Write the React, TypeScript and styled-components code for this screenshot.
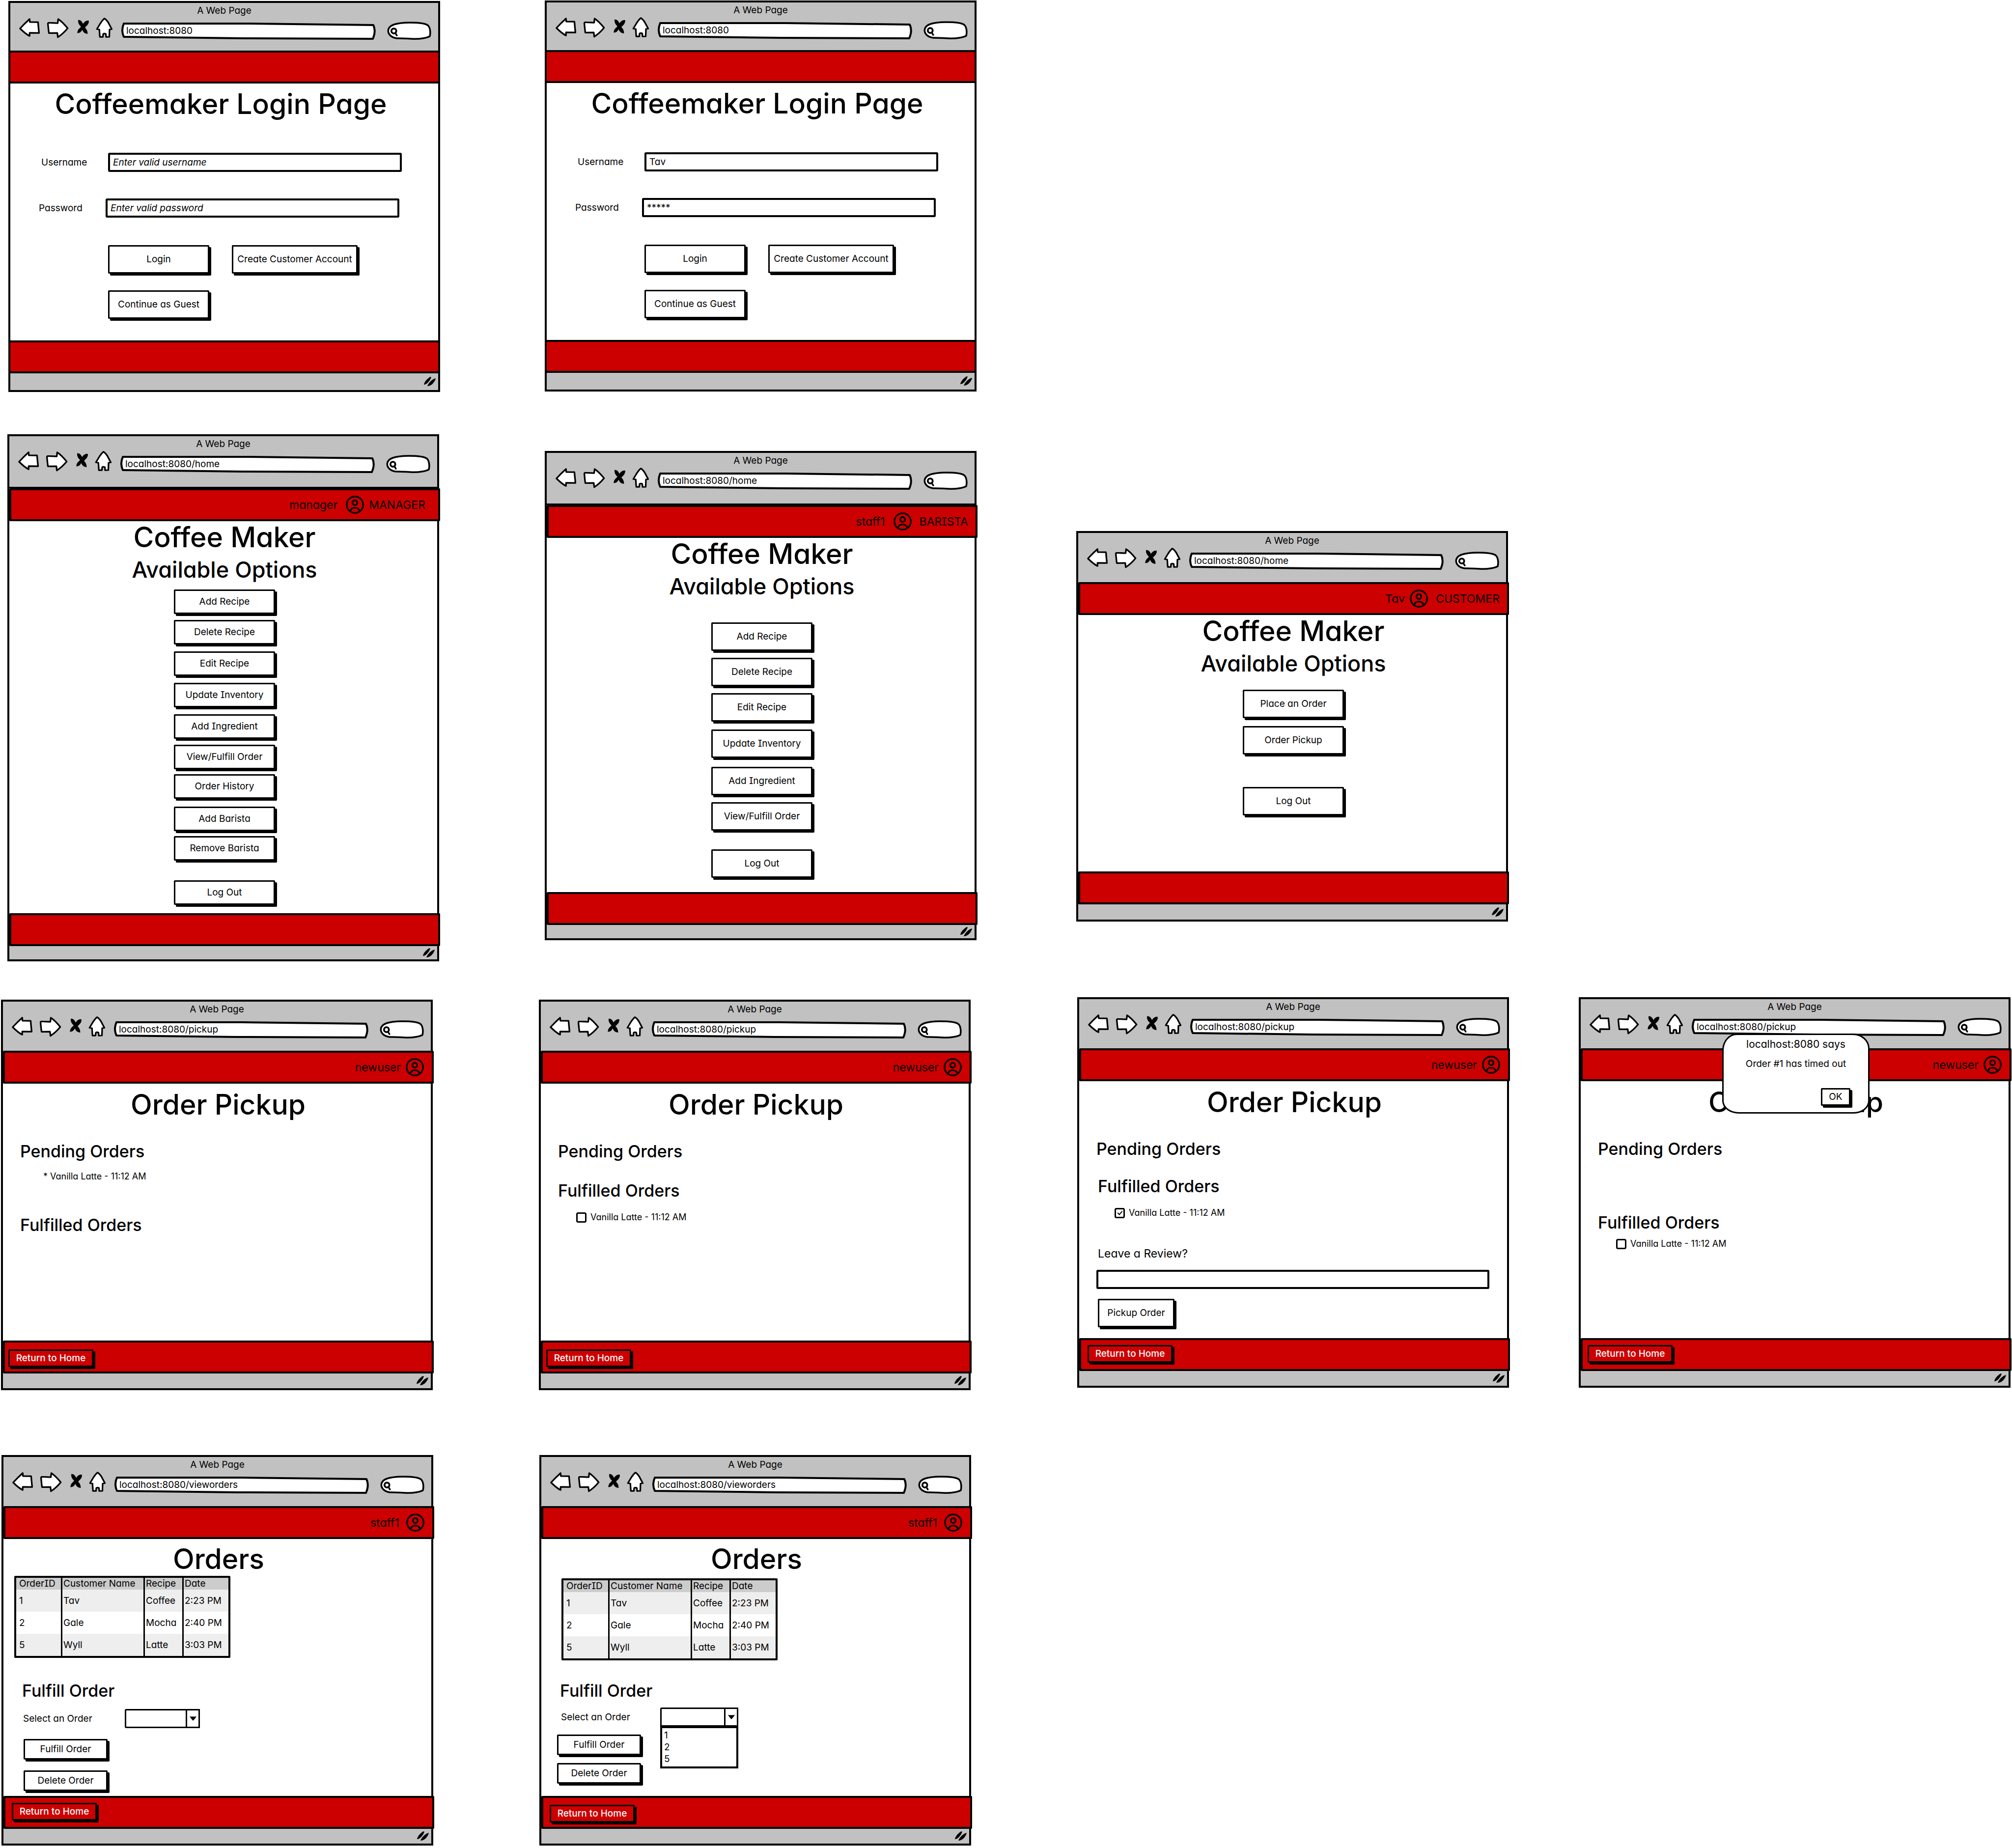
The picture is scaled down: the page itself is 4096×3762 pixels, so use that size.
import React, { useId } from "react";
import styled, { createGlobalStyle } from "styled-components";

const ink = "#000";
const chromeGrey = "#c1c1c1";
const red = "#cc0000";

const GlobalStyle = createGlobalStyle`
  *, *::before, *::after { box-sizing: border-box; }
  body { margin: 0; background: #fff; }
  #root, button, input, select, table {
    color: ${ink};
    font-family: Inter, "Liberation Sans", sans-serif;
    font-size: 19px;
    line-height: 24px;
    font-feature-settings: "cv11", "cv08";
  }
`;

/* ---------- board ---------- */

const Board = styled.main`
  display: flex;
  flex-direction: column;
  min-height: 100vh;
  overflow: hidden;
`;

const BoardRow = styled.section<{ $tracks: number[]; $left: number; $above: number }>`
  display: grid;
  grid-template-columns: ${(p) => p.$tracks.map((t) => `minmax(0, ${t}fr)`).join(" ")};
  align-items: start;
  padding-left: ${(p) => p.$left}px;
  margin-top: ${(p) => p.$above}px;
`;

const Frame = styled.article<{ $drop: number }>`
  position: relative;
  display: flex;
  flex-direction: column;
  width: 100%;
  max-width: 879px;
  margin-top: ${(p) => p.$drop}px;
  border: 4px solid ${ink};
  background: #fff;
`;

/* ---------- browser chrome ---------- */

const Chrome = styled.header<{ $tall?: boolean; $short?: boolean }>`
  min-height: ${(p) => (p.$tall ? 106 : p.$short ? 97 : 100)}px;
  padding-top: 4px;
  border-bottom: ${(p) => (p.$tall ? 3 : 0)}px solid ${ink};
  background: ${chromeGrey};
`;

const ChromeTitle = styled.div`
  text-align: center;
`;

const Toolbar = styled.div`
  display: flex;
  align-items: flex-end;
  gap: 12px;
  padding: 0 14px 0 17px;
`;

const IconButton = styled.button`
  display: block;
  padding: 0;
  border: 0;
  background: none;
  svg { display: block; }
`;

const Address = styled.div`
  position: relative;
  flex: 1;
  height: 36px;
  margin: 0 11px 0 4px;
`;

const SearchPill = styled.div`
  position: relative;
  width: 90px;
  height: 37px;
`;

const Outline = styled.svg`
  position: absolute;
  inset: 0;
  width: 100%;
  height: 100%;
`;

const BareInput = styled.input<{ $inset: number }>`
  position: relative;
  display: block;
  width: 100%;
  height: 34px;
  padding: 0 8px 0 ${(p) => p.$inset}px;
  border: 0;
  outline: 0;
  background: transparent;
`;

const StatusBar = styled.footer<{ $height: number }>`
  display: flex;
  justify-content: flex-end;
  align-items: center;
  height: ${(p) => p.$height}px;
  padding-right: 5px;
  background: ${chromeGrey};
`;

const RedBar = styled.div<{ $flush?: boolean }>`
  display: flex;
  align-items: center;
  height: 67px;
  margin: ${(p) => (p.$flush ? "0 -4px" : "0 -6px 0 0")};
  border: 4px solid ${ink};
  border-radius: 2px;
  background: ${red};
`;

const UserBar = styled(RedBar)<{ $end: number }>`
  justify-content: flex-end;
  padding-right: ${(p) => p.$end}px;
  font-size: 23px;
  line-height: 28px;
`;

const AvatarSlot = styled.span<{ $before: number; $after: number }>`
  display: block;
  height: 37px;
  margin: 0 ${(p) => p.$after}px 0 ${(p) => p.$before}px;
`;

const HomeBar = styled(RedBar)<{ $top: number; $start: number }>`
  align-items: flex-start;
  padding: ${(p) => p.$top}px 0 0 ${(p) => p.$start}px;
`;

const Body = styled.div<{ $height: number; $top?: number }>`
  position: relative;
  display: flex;
  flex-direction: column;
  min-height: ${(p) => p.$height}px;
  padding-top: ${(p) => p.$top ?? 0}px;
`;

/* ---------- text ---------- */

const PageTitle = styled.h1<{ $nudge?: "left" | "right" }>`
  margin: 0;
  padding: ${(p) => (p.$nudge === "left" ? "0 14px 0 0" : "0 0 0 5px")};
  font-size: 57px;
  line-height: 66px;
  font-weight: 500;
  text-align: center;
`;

const SubTitle = styled.h2`
  margin: 6px 0 0;
  padding-left: 5px;
  font-size: 45px;
  line-height: 54px;
  font-weight: 500;
  text-align: center;
`;

const SectionTitle = styled.h2<{ $above: number; $left?: number }>`
  margin: ${(p) => p.$above}px 0 0 ${(p) => p.$left ?? 35}px;
  font-size: 34px;
  line-height: 40px;
  font-weight: 500;
`;

/* ---------- controls ---------- */

const Button = styled.button<{ $w: number; $h: number; $above?: number; $danger?: boolean }>`
  flex: none;
  width: ${(p) => p.$w}px;
  height: ${(p) => p.$h}px;
  margin-top: ${(p) => p.$above ?? 0}px;
  padding: 0;
  border: 3px solid ${ink};
  border-radius: 2px;
  background: ${(p) => (p.$danger ? red : "#fff")};
  box-shadow: 4px 4px 0 ${ink};
  color: ${(p) => (p.$danger ? "#fff" : ink)};
  font-weight: ${(p) => (p.$danger ? 500 : 400)};
  white-space: nowrap;
`;

const TextField = styled.input`
  flex: 1;
  min-width: 0;
  height: 39px;
  padding: 0 6px;
  border: 4px solid ${ink};
  border-radius: 3px;
  outline: 0;
  background: #fff;
  &::placeholder {
    color: ${ink};
    font-style: italic;
    opacity: 1;
  }
`;

const FieldRow = styled.div<{ $left: number; $right: number; $above: number }>`
  display: flex;
  align-items: center;
  margin: ${(p) => p.$above}px ${(p) => p.$right}px 0 ${(p) => p.$left}px;
`;

const FieldLabel = styled.label<{ $w: number }>`
  width: ${(p) => p.$w}px;
`;

const ButtonRow = styled.div<{ $above: number; $left: number }>`
  display: flex;
  gap: 46px;
  margin: ${(p) => p.$above}px 0 0 ${(p) => p.$left}px;
`;

const Menu = styled.nav<{ $above: number }>`
  display: flex;
  flex-direction: column;
  align-items: center;
  padding: ${(p) => p.$above}px 0 0 5px;
`;

const BulletList = styled.ul`
  margin: 19px 0 0;
  padding: 0 0 0 82px;
  font-size: 18px;
  list-style: none;
`;

const CheckRow = styled.label<{ $above: number }>`
  display: flex;
  align-items: center;
  gap: 8px;
  margin: ${(p) => p.$above}px 0 0 72px;
  font-size: 18px;
`;

const Tick = styled.input`
  appearance: none;
  position: relative;
  width: 21px;
  height: 21px;
  margin: 0;
  border: 3px solid ${ink};
  border-radius: 4px;
  background: #fff;
  &:checked::after {
    content: "";
    position: absolute;
    left: 5px;
    top: 1px;
    width: 6px;
    height: 10px;
    border: solid ${ink};
    border-width: 0 2px 2px 0;
    transform: rotate(42deg);
  }
`;

const ReviewLabel = styled.label`
  margin: 57px 0 0 38px;
  font-size: 23px;
  line-height: 28px;
`;

const ReviewRow = styled.div`
  display: flex;
  margin: 19px 36px 0 35px;
`;

const SelectBox = styled.div<{ $w: number }>`
  position: relative;
  width: ${(p) => p.$w}px;
`;

const Select = styled.select`
  appearance: none;
  display: block;
  width: 100%;
  height: 39px;
  padding: 0 30px 0 8px;
  border: 3px solid ${ink};
  border-radius: 3px;
  background: #fff;
`;

const SelectArrow = styled.span`
  position: absolute;
  top: 0;
  right: 0;
  display: grid;
  place-items: center;
  width: 29px;
  height: 39px;
  border: solid ${ink};
  border-width: 0 3px;
  pointer-events: none;
`;

const OptionList = styled.ul`
  position: absolute;
  top: 36px;
  left: 0;
  width: 100%;
  margin: 0;
  padding: 3px 0 3px 4px;
  border: 4px solid ${ink};
  border-top-width: 6px;
  background: #fff;
  list-style: none;
`;

const OrdersTable = styled.table<{ $left: number; $above: number }>`
  width: 440px;
  margin: ${(p) => p.$above}px 0 0 ${(p) => p.$left}px;
  border: 4px solid ${ink};
  border-radius: 2px;
  border-spacing: 0;
  table-layout: fixed;
  th, td {
    height: 45px;
    padding: 0 0 0 2px;
    border-right: 3px solid ${ink};
    font-weight: 400;
    text-align: left;
    white-space: nowrap;
  }
  th { height: 24px; background: #ccc; }
  th:first-child, td:first-child { padding-left: 6px; }
  th:last-child, td:last-child { border-right: 0; }
  tbody tr:nth-child(odd) { background: #eee; }
`;

const Dialog = styled.div`
  position: absolute;
  top: 70px;
  left: 288px;
  display: flex;
  flex-direction: column;
  align-items: center;
  width: 300px;
  height: 163px;
  padding-top: 5px;
  border: 3px solid ${ink};
  border-radius: 30px 34px 32px 34px / 34px 30px 26px 26px;
  background: #fff;
`;

const DialogTitle = styled.div`
  font-size: 21px;
  line-height: 28px;
`;

const DialogText = styled.div`
  margin-top: 14px;
`;

const DialogActions = styled.div`
  align-self: flex-end;
  margin: 37px 36px 0 0;
`;

/* ---------- drawings ---------- */

const sketch = { fill: "#fff", stroke: ink, strokeWidth: 13, strokeLinejoin: "round" as const };

const BackIcon = () => (
  <svg width="45" height="47" viewBox="90 137 178 186">
    <path {...sketch} d="M178 156 L180 180 L246 181 Q249 220 254 268 L178 267 L178 292 Q150 280 101 232 Q135 195 178 156 Z" />
  </svg>
);

const ForwardIcon = () => (
  <svg width="45" height="47" viewBox="313 137 178 186">
    <path {...sketch} d="M406 156 Q440 178 482 230 Q445 275 403 302 L399 268 L331 269 Q327 240 323 192 Q325 185 335 186 L402 189 Z" />
  </svg>
);

const StopIcon = () => (
  <svg width="30" height="47" viewBox="542 137 120 186">
    <path
      fill={ink}
      d="M570 163 Q590 160 601 178 L611 194 Q630 163 657 168 Q660 190 643 207 L626 224 Q648 246 648 276 Q624 275 611 257 L603 243 Q590 270 564 270 Q562 248 580 232 L594 218 Q567 195 570 163 Z"
    />
  </svg>
);

const HomeIcon = () => (
  <svg width="37" height="47" viewBox="706 137 148 186">
    <path
      {...sketch}
      d="M780 151 Q795 158 812 184 L840 237 L822 240 L820 300 L794 301 L792 277 Q780 270 770 277 L768 300 L743 300 L739 240 L719 237 L746 192 Q765 163 780 151 Z"
    />
  </svg>
);

const AvatarIcon = () => (
  <svg width="37" height="37" viewBox="510 522 144 144" fill="none" stroke={ink} strokeWidth="13" role="img" aria-label="Account">
    <circle cx="582" cy="594" r="65" />
    <circle cx="582" cy="578" r="19" />
    <path d="M546 643 Q553 618 582 618 Q611 618 619 643" />
  </svg>
);

const GripIcon = () => (
  <svg width="24" height="20" viewBox="0 0 24 20" fill={ink} aria-hidden="true">
    <path d="M0 16 Q1 9 10 2 L13 0 L15 1 Q13 7 8 12 Q4 16 0 16 Z" />
    <path d="M7 19 Q9 13 16 7 Q20 4 24 3 Q23 9 17 15 Q12 19 7 19 Z" />
  </svg>
);

const ArrowIcon = () => (
  <svg width="14" height="9" viewBox="0 0 14 9" fill={ink} aria-hidden="true">
    <path d="M0 0 Q7 1 14 0 Q12 4 7 9 Q3 5 0 0 Z" />
  </svg>
);

/* ---------- composed parts ---------- */

type Account = { name: string; role?: string; before: number; after: number; end: number };

type BrowserProps = {
  url: string;
  drop?: number;
  tall?: boolean;
  short?: boolean;
  flush?: boolean;
  account?: Account;
  home?: { top: number; start: number };
  bodyHeight: number;
  bodyTop?: number;
  status: number;
  overlay?: React.ReactNode;
  children: React.ReactNode;
};

function Browser(p: BrowserProps) {
  return (
    <Frame $drop={p.drop ?? 0}>
      <Chrome $tall={p.tall} $short={p.short}>
        <ChromeTitle>A Web Page</ChromeTitle>
        <Toolbar>
          <IconButton aria-label="Back"><BackIcon /></IconButton>
          <IconButton aria-label="Forward"><ForwardIcon /></IconButton>
          <IconButton aria-label="Stop"><StopIcon /></IconButton>
          <IconButton aria-label="Home"><HomeIcon /></IconButton>
          <Address>
            <Outline viewBox="0 0 517 36" preserveAspectRatio="none" aria-hidden="true">
              <path
                d="M5 3 L260 3 L512 6 Q518 18 511 34 L250 33 L5 30 Q-1 17 5 3 Z"
                fill="#fff"
                stroke={ink}
                strokeWidth="4"
                strokeLinejoin="round"
              />
            </Outline>
            <BareInput $inset={10} aria-label="Address" defaultValue={p.url} />
          </Address>
          <SearchPill>
            <Outline viewBox="837 195 358 148" aria-hidden="true">
              <path
                d="M916 331 C872 326 845 300 845 268 C848 225 900 204 1020 203 C1100 203 1150 211 1168 225 C1190 245 1190 290 1184 314 C1165 327 1110 336 1058 336 C1000 334 960 329 916 331 Z"
                fill="#fff"
                stroke={ink}
                strokeWidth="14"
              />
              <circle cx="891" cy="271" r="20" fill="none" stroke={ink} strokeWidth="15" />
              <path d="M903 288 L916 308" stroke={ink} strokeWidth="13" strokeLinecap="round" />
            </Outline>
            <BareInput $inset={24} aria-label="Search" />
          </SearchPill>
        </Toolbar>
      </Chrome>
      {p.account ? (
        <UserBar $end={p.account.end}>
          <span>{p.account.name}</span>
          <AvatarSlot $before={p.account.before} $after={p.account.after}><AvatarIcon /></AvatarSlot>
          {p.account.role && <span>{p.account.role}</span>}
        </UserBar>
      ) : (
        <RedBar $flush={p.flush} />
      )}
      <Body $height={p.bodyHeight} $top={p.bodyTop}>{p.children}</Body>
      {p.home ? (
        <HomeBar $top={p.home.top} $start={p.home.start}>
          <Button $w={173} $h={36} $danger>Return to Home</Button>
        </HomeBar>
      ) : (
        <RedBar $flush={p.flush} />
      )}
      <StatusBar $height={p.status}><GripIcon /></StatusBar>
      {p.overlay}
    </Frame>
  );
}

function LoginScreen({ filled, drop }: { filled?: boolean; drop?: number }) {
  const id = useId();
  return (
    <Browser url="localhost:8080" short flush drop={drop} bodyHeight={523} bodyTop={9} status={34}>
      <PageTitle $nudge="left">Coffeemaker Login Page</PageTitle>
      <FieldRow $left={63} $right={74} $above={66}>
        <FieldLabel $w={136} htmlFor={`${id}-user`}>Username</FieldLabel>
        <TextField id={`${id}-user`} placeholder="Enter valid username" defaultValue={filled ? "Tav" : ""} />
      </FieldRow>
      <FieldRow $left={58} $right={79} $above={54}>
        <FieldLabel $w={136} htmlFor={`${id}-pass`}>Password</FieldLabel>
        <TextField id={`${id}-pass`} placeholder="Enter valid password" defaultValue={filled ? "*****" : ""} />
      </FieldRow>
      <ButtonRow $above={56} $left={199}>
        <Button $w={206} $h={58}>Login</Button>
        <Button $w={256} $h={58}>Create Customer Account</Button>
      </ButtonRow>
      <ButtonRow $above={34} $left={199}>
        <Button $w={206} $h={58}>Continue as Guest</Button>
      </ButtonRow>
    </Browser>
  );
}

type HomeProps = {
  account: Account;
  drop?: number;
  tall?: boolean;
  bodyHeight: number;
  status: number;
  buttonHeight: number;
  above: number;
  items: [string, number][];
};

function HomeScreen(p: HomeProps) {
  return (
    <Browser url="localhost:8080/home" drop={p.drop} tall={p.tall} account={p.account} bodyHeight={p.bodyHeight} status={p.status}>
      <PageTitle>Coffee Maker</PageTitle>
      <SubTitle>Available Options</SubTitle>
      <Menu $above={p.above}>
        {p.items.map(([label, above]) => (
          <Button key={label} $w={206} $h={p.buttonHeight} $above={above}>{label}</Button>
        ))}
      </Menu>
    </Browser>
  );
}

const newUser: Account = { name: "newuser", before: 10, after: 0, end: 16 };

type PickupProps = {
  drop?: number;
  home: { top: number; start: number };
  overlay?: React.ReactNode;
  children: React.ReactNode;
};

function PickupScreen(p: PickupProps) {
  return (
    <Browser
      url="localhost:8080/pickup"
      drop={p.drop}
      account={newUser}
      home={p.home}
      bodyHeight={523}
      bodyTop={10}
      status={30}
      overlay={p.overlay}
    >
      <PageTitle>Order Pickup</PageTitle>
      <SectionTitle $above={42}>Pending Orders</SectionTitle>
      {p.children}
    </Browser>
  );
}

function LatteCheck({ above, checked }: { above: number; checked?: boolean }) {
  return (
    <CheckRow $above={above}>
      <Tick type="checkbox" defaultChecked={checked} />
      Vanilla Latte - 11:12 AM
    </CheckRow>
  );
}

const orders = [
  ["1", "Tav", "Coffee", "2:23 PM"],
  ["2", "Gale", "Mocha", "2:40 PM"],
  ["5", "Wyll", "Latte", "3:03 PM"],
];

function OrdersScreen({ open }: { open?: boolean }) {
  const id = useId();
  return (
    <Browser
      url="localhost:8080/vieworders"
      account={{ name: "staff1", before: 14, after: 0, end: 16 }}
      home={open ? { top: 14, start: 13 } : { top: 10, start: 13 }}
      bodyHeight={523}
      bodyTop={8}
      status={30}
    >
      <PageTitle>Orders</PageTitle>
      <OrdersTable $left={open ? 41 : 22} $above={open ? 6 : 1}>
        <colgroup>
          <col width="94" />
          <col width="168" />
          <col width="79" />
          <col />
        </colgroup>
        <thead>
          <tr>
            <th>OrderID</th>
            <th>Customer Name</th>
            <th>Recipe</th>
            <th>Date</th>
          </tr>
        </thead>
        <tbody>
          {orders.map((row) => (
            <tr key={row[0]}>
              {row.map((cell) => <td key={cell}>{cell}</td>)}
            </tr>
          ))}
        </tbody>
      </OrdersTable>
      <SectionTitle $above={open ? 42 : 47} $left={38}>Fulfill Order</SectionTitle>
      <FieldRow $left={40} $right={0} $above={open ? 14 : 17}>
        <FieldLabel $w={open ? 202 : 207} htmlFor={`${id}-order`}>Select an Order</FieldLabel>
        <SelectBox $w={open ? 159 : 153}>
          <Select id={`${id}-order`} defaultValue="">
            <option value="" />
            {orders.map((row) => <option key={row[0]}>{row[0]}</option>)}
          </Select>
          <SelectArrow><ArrowIcon /></SelectArrow>
          {open && (
            <OptionList>
              {orders.map((row) => <li key={row[0]}>{row[0]}</li>)}
            </OptionList>
          )}
        </SelectBox>
      </FieldRow>
      <ButtonRow $above={open ? 16 : 22} $left={open ? 32 : 41}>
        <Button $w={171} $h={42}>Fulfill Order</Button>
      </ButtonRow>
      <ButtonRow $above={open ? 16 : 22} $left={open ? 32 : 41}>
        <Button $w={171} $h={42}>Delete Order</Button>
      </ButtonRow>
    </Browser>
  );
}

export default function App() {
  const id = useId();
  return (
    <>
      <GlobalStyle />
      <Board>
        <BoardRow $tracks={[1092, 2987]} $left={17} $above={1}>
          <LoginScreen drop={1} />
          <LoginScreen filled />
        </BoardRow>

        <BoardRow $tracks={[1094, 1082, 1905]} $left={15} $above={86}>
          <HomeScreen
            tall
            account={{ name: "manager", role: "MANAGER", before: 17, after: 10, end: 26 }}
            bodyHeight={798}
            status={27}
            buttonHeight={50}
            above={13}
            items={[
              ["Add Recipe", 0],
              ["Delete Recipe", 12],
              ["Edit Recipe", 14],
              ["Update Inventory", 14],
              ["Add Ingredient", 14],
              ["View/Fulfill Order", 12],
              ["Order History", 10],
              ["Add Barista", 16],
              ["Remove Barista", 10],
              ["Log Out", 40],
            ]}
          />
          <HomeScreen
            tall
            drop={34}
            account={{ name: "staff1", role: "BARISTA", before: 17, after: 16, end: 15 }}
            bodyHeight={721}
            status={27}
            buttonHeight={58}
            above={46}
            items={[
              ["Add Recipe", 0],
              ["Delete Recipe", 14],
              ["Edit Recipe", 14],
              ["Update Inventory", 16],
              ["Add Ingredient", 18],
              ["View/Fulfill Order", 14],
              ["Log Out", 38],
            ]}
          />
          <HomeScreen
            drop={197}
            account={{ name: "Tav", role: "CUSTOMER", before: 10, after: 16, end: 15 }}
            bodyHeight={522}
            status={31}
            buttonHeight={58}
            above={26}
            items={[
              ["Place an Order", 0],
              ["Order Pickup", 16],
              ["Log Out", 66],
            ]}
          />
        </BoardRow>

        <BoardRow $tracks={[1095, 1096, 1021, 882]} $left={2} $above={73}>
          <PickupScreen drop={5} home={{ top: 14, start: 7 }}>
            <BulletList>
              <li>* Vanilla Latte - 11:12 AM</li>
            </BulletList>
            <SectionTitle $above={67}>Fulfilled Orders</SectionTitle>
          </PickupScreen>
          <PickupScreen drop={5} home={{ top: 14, start: 7 }}>
            <SectionTitle $above={40}>Fulfilled Orders</SectionTitle>
            <LatteCheck above={22} />
          </PickupScreen>
          <PickupScreen home={{ top: 10, start: 13 }}>
            <SectionTitle $above={36} $left={38}>Fulfilled Orders</SectionTitle>
            <LatteCheck above={22} checked />
            <ReviewLabel htmlFor={`${id}-review`}>Leave a Review?</ReviewLabel>
            <ReviewRow>
              <TextField id={`${id}-review`} />
            </ReviewRow>
            <ButtonRow $above={20} $left={38}>
              <Button $w={156} $h={58}>Pickup Order</Button>
            </ButtonRow>
          </PickupScreen>
          <PickupScreen
            home={{ top: 10, start: 10 }}
            overlay={
              <Dialog role="dialog" aria-label="localhost:8080 says">
                <DialogTitle>localhost:8080 says</DialogTitle>
                <DialogText>Order #1 has timed out</DialogText>
                <DialogActions>
                  <Button $w={60} $h={36}>OK</Button>
                </DialogActions>
              </Dialog>
            }
          >
            <SectionTitle $above={110}>Fulfilled Orders</SectionTitle>
            <LatteCheck above={11} />
          </PickupScreen>
        </BoardRow>

        <BoardRow $tracks={[1095, 2998]} $left={3} $above={132}>
          <OrdersScreen />
          <OrdersScreen open />
        </BoardRow>
      </Board>
    </>
  );
}
